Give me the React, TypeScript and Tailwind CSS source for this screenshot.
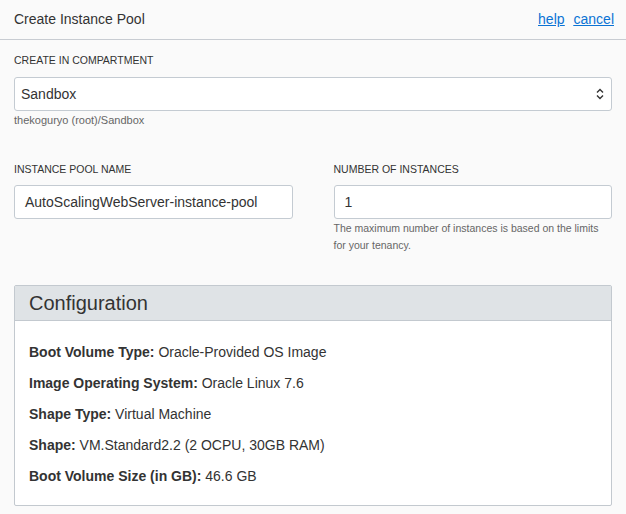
import React from "react";

const rows: [string, string][] = [
  ["Boot Volume Type:", "Oracle-Provided OS Image"],
  ["Image Operating System:", "Oracle Linux 7.6"],
  ["Shape Type:", "Virtual Machine"],
  ["Shape:", "VM.Standard2.2 (2 OCPU, 30GB RAM)"],
  ["Boot Volume Size (in GB):", "46.6 GB"],
];

function Label({ children }: { children: React.ReactNode }) {
  return <div className="text-[10.5px] leading-[12px] text-[#333] uppercase">{children}</div>;
}

export default function App() {
  return (
    <div
      className="w-[626px] h-[514px] bg-[#fafafa] text-[#333] overflow-hidden"
      style={{ fontFamily: '"Liberation Sans", Arial, sans-serif' }}
    >
      {/* Header */}
      <div className="h-[40px] px-[12px] flex items-center justify-between border-b border-[#c8ccd2]">
        <div className="text-[14px] text-[#333] pl-[2px]">Create Instance Pool</div>
        <div className="flex gap-[9px] text-[14px] text-[#0b73d4] underline">
          <a href="#">help</a>
          <a href="#">cancel</a>
        </div>
      </div>

      <div className="px-[14px]">
        {/* Compartment */}
        <div className="pt-[14px]">
          <Label>Create in compartment</Label>
          <div className="mt-[11px] h-[34px] bg-white border border-[#c4cbd2] rounded-[3px] flex items-center justify-between pl-[6px] pr-[6px]">
            <span className="text-[14px]">Sandbox</span>
            <svg width="10" height="14" viewBox="0 0 10 14" fill="none" stroke="#333" strokeWidth="1.4">
              <path d="M2 5.5 L5 2.5 L8 5.5" />
              <path d="M2 8.5 L5 11.5 L8 8.5" />
            </svg>
          </div>
          <div className="mt-[3px] text-[11px] leading-[12px] text-[#666]">thekoguryo (root)/Sandbox</div>
        </div>

        {/* Name + count */}
        <div className="mt-[37px] grid grid-cols-2 gap-[41px]">
          <div>
            <Label>Instance pool name</Label>
            <div className="mt-[10px] h-[34px] bg-white border border-[#c4cbd2] rounded-[3px] flex items-center px-[10px] text-[14px]">
              AutoScalingWebServer-instance-pool
            </div>
          </div>
          <div>
            <Label>Number of instances</Label>
            <div className="mt-[10px] h-[34px] bg-white border border-[#c4cbd2] rounded-[3px] flex items-center px-[10px] text-[14px]">
              1
            </div>
            <div className="mt-[1px] text-[10.5px] leading-[17px] text-[#666]">
              The maximum number of instances is based on the limits for your tenancy.
            </div>
          </div>
        </div>

        {/* Configuration panel */}
        <div className="mt-[31px] border border-[#c3c9cf] rounded-[2px] bg-white">
          <div className="h-[35px] bg-[#dfe3e6] border-b border-[#c3c9cf] flex items-center px-[14px] text-[20px] text-[#333]">
            Configuration
          </div>
          <div className="px-[14px] pt-[23px] pb-[20px] flex flex-col gap-[14px] text-[14px] leading-[17px]">
            {rows.map(([k, v]) => (
              <div key={k}>
                <span className="font-bold">{k}</span> {v}
              </div>
            ))}
          </div>
        </div>
      </div>
    </div>
  );
}
